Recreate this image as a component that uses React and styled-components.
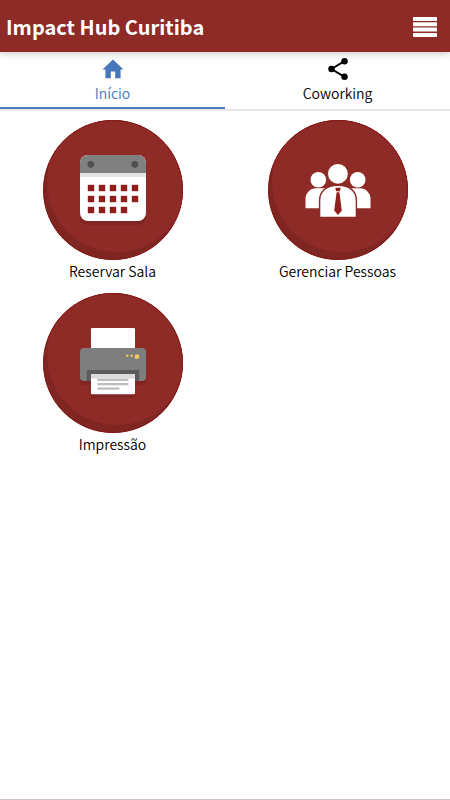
import React, { useId } from "react";
import styled, { createGlobalStyle } from "styled-components";

const tabs = [
  { id: "inicio", label: "Início", Icon: HomeIcon },
  { id: "coworking", label: "Coworking", Icon: ShareIcon },
];

const actions = [
  { id: "sala", label: "Reservar Sala", Drawing: Calendar },
  { id: "pessoas", label: "Gerenciar Pessoas", Drawing: People },
  { id: "impressao", label: "Impressão", Drawing: Printer },
];

export default function App() {
  const [active, setActive] = React.useState("inicio");

  return (
    <Page>
      <GlobalStyle />
      <Header>
        <Title>Impact Hub Curitiba</Title>
        <MenuButton type="button" aria-label="Menu">
          <svg width="24" height="20" viewBox="0 0 24 20" fill="#ffffff">
            <rect y="0" width="24" height="4" rx="0.6" />
            <rect y="5.3" width="24" height="4" rx="0.6" />
            <rect y="10.6" width="24" height="4" rx="0.6" />
            <rect y="15.9" width="24" height="4" rx="0.6" />
          </svg>
        </MenuButton>
      </Header>
      <Tabs>
        {tabs.map(({ id, label, Icon }) => (
          <Tab
            key={id}
            type="button"
            $active={id === active}
            onClick={() => setActive(id)}
          >
            <Icon />
            <span>{label}</span>
          </Tab>
        ))}
      </Tabs>
      <Grid>
        {actions.map(({ id, label, Drawing }) => (
          <Action key={id} type="button">
            <Disc>
              <Drawing />
            </Disc>
            <span>{label}</span>
          </Action>
        ))}
      </Grid>
    </Page>
  );
}

function HomeIcon() {
  return (
    <svg width="26" height="26" viewBox="0 0 24 24" fill="currentColor">
      <path d="M10 20.5v-6.300h4v6.300h5v-8h2.700L12 3.200 2.300 12.500H5v8z" />
    </svg>
  );
}

function ShareIcon() {
  return (
    <svg width="26" height="26" viewBox="0 0 24 24" fill="currentColor">
      <path
        d="M18 4.8 6 12l12 7.2"
        fill="none"
        stroke="currentColor"
        strokeWidth="1.8"
      />
      <circle cx="18" cy="4.8" r="3" />
      <circle cx="6" cy="12" r="3" />
      <circle cx="18" cy="19.2" r="3" />
    </svg>
  );
}

function Disc({ children }) {
  const clip = useId();

  return (
    <svg width="140" height="140" viewBox="0 0 140 140" aria-hidden="true">
      <clipPath id={clip}>
        <circle cx="70" cy="70" r="70" />
      </clipPath>
      <g clipPath={`url(#${clip})`}>
        <circle cx="70" cy="70" r="70" fill="#7f2622" />
        <circle cx="74" cy="62" r="70" fill="#8e2b26" />
      </g>
      <circle
        cx="70"
        cy="70"
        r="69.5"
        fill="none"
        stroke="#861a18"
        strokeWidth="1"
      />
      {children}
    </svg>
  );
}

function Calendar() {
  const days = [];
  [68, 79, 90].forEach((y, row) => {
    [48, 59, 70, 81, 92].forEach((x, col) => {
      if (row === 2 && col === 4) return;
      days.push(
        <rect
          key={`${x}-${y}`}
          x={x - 3.2}
          y={y - 3.2}
          width="6.4"
          height="6.4"
          fill="#8e1f1b"
        />
      );
    });
  });

  return (
    <g>
      <rect x="37" y="39" width="66" height="66" rx="8" fill="#7f2622" />
      <rect x="37" y="35" width="66" height="66" rx="8" fill="#ffffff" />
      <path d="M37 53V43a8 8 0 0 1 8-8h50a8 8 0 0 1 8 8v10z" fill="#808080" />
      <rect x="37" y="53" width="66" height="4" fill="#e4e4e4" />
      <circle cx="47.8" cy="44.3" r="3.4" fill="#505050" />
      <circle cx="91.8" cy="44.3" r="3.4" fill="#505050" />
      {days}
    </g>
  );
}

function People() {
  return (
    <g fill="#ffffff">
      <circle cx="50.3" cy="59.7" r="7.8" />
      <circle cx="89.7" cy="59.7" r="7.8" />
      <path d="M37.5 88.3V79a10.5 10.5 0 0 1 10.5-10.7h10v20z" />
      <path d="M102.5 88.3V79A10.5 10.5 0 0 0 92 68.3H82v20z" />
      <path
        d="M51.6 97.4V80.5C51.6 71 58.5 65.3 70 65.3s18.4 5.7 18.4 15.2v16.9z"
        stroke="#8e2b26"
        strokeWidth="1.4"
      />
      <circle cx="69.9" cy="53.8" r="9.9" />
      <path
        d="M67.3 67.8h5.4l-.8 3.4h-3.8zM68.6 72.2h2.8l2.4 18.3-3.8 4.5-3.8-4.5z"
        fill="#8e1f1b"
      />
    </g>
  );
}

function Printer() {
  return (
    <g>
      <rect x="37" y="60" width="66" height="32" rx="4" fill="#7f2622" />
      <rect x="48" y="90" width="44" height="15" rx="1.5" fill="#7f2622" />
      <rect x="48" y="35" width="44" height="24" rx="1.2" fill="#ffffff" />
      <rect x="37" y="55" width="66" height="33" rx="4" fill="#7e7e7e" />
      <rect x="43.8" y="77" width="52.4" height="11" fill="#5c5c5c" />
      <path
        d="M48 81h44v19a1.3 1.3 0 0 1-1.3 1.3H49.3A1.3 1.3 0 0 1 48 100z"
        fill="#ffffff"
      />
      <rect x="48" y="81" width="44" height="4.6" fill="#dcdcdc" />
      <g fill="#bdbdbd">
        <rect x="54.4" y="85.7" width="31" height="2.3" />
        <rect x="54.4" y="90" width="31" height="2.3" />
        <rect x="54.4" y="94.4" width="22" height="2.3" />
      </g>
      <g fill="#f3c85a">
        <circle cx="84.3" cy="62.7" r="1.2" />
        <circle cx="88.6" cy="62.7" r="1.2" />
        <circle cx="93.9" cy="63.7" r="2.4" />
      </g>
    </g>
  );
}

const GlobalStyle = createGlobalStyle`
  *, *::before, *::after {
    box-sizing: border-box;
  }

  body {
    margin: 0;
    background: #ffffff;
    color: #000000;
    font-family: "Noto Sans CJK JP", "Noto Sans", sans-serif;
  }

  button {
    border: 0;
    padding: 0;
    background: none;
    color: inherit;
    font: inherit;
    cursor: pointer;
  }

  svg {
    display: block;
  }
`;

const Page = styled.div`
  min-height: 100vh;
  display: flex;
  flex-direction: column;
  border-bottom: 1px solid #d3c2c6;
`;

const Header = styled.header`
  display: flex;
  align-items: center;
  justify-content: space-between;
  height: 52px;
  padding: 2px 13px 0 6px;
  background: #8e2b26;
  color: #ffffff;
  box-shadow: 0 1px 8px rgba(0, 0, 0, 0.25);
`;

const Title = styled.h1`
  margin: 0;
  font-size: 20px;
  font-weight: 700;
  line-height: 30px;
`;

const MenuButton = styled.button`
  line-height: 0;
`;

const Tabs = styled.nav`
  display: flex;
  border-bottom: 2px solid #e6e6e6;
`;

const Tab = styled.button`
  flex: 1;
  display: flex;
  flex-direction: column;
  align-items: center;
  height: 57px;
  padding-top: 4px;
  border-bottom: 2px solid
    ${({ $active }) => ($active ? "#4a79bf" : "transparent")};
  color: ${({ $active }) => ($active ? "#4676bb" : "#000000")};
  font-size: 14px;
  font-weight: 350;
  line-height: 22px;
`;

const Grid = styled.main`
  display: grid;
  grid-template-columns: 1fr 1fr;
  row-gap: 11px;
  padding-top: 9px;
`;

const Action = styled.button`
  display: flex;
  flex-direction: column;
  align-items: center;
  font-size: 14px;
  font-weight: 350;
  line-height: 22px;
`;
